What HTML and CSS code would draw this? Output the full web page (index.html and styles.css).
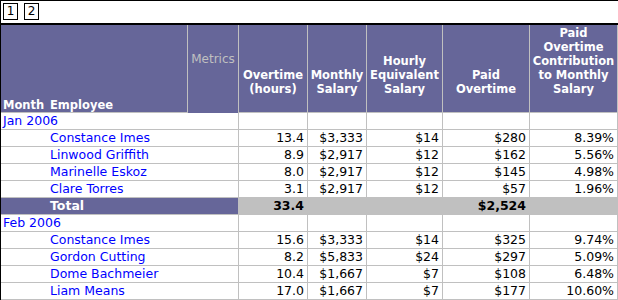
FILE: index.html
```html
<!DOCTYPE html>
<html>
<head>
<meta charset="utf-8">
<link rel="stylesheet" href="styles.css">
</head>
<body>
<div class="report">
  <div class="pager">
    <span class="page">1</span>
    <span class="page">2</span>
  </div>
  <div class="grid">
    <div class="hd hd-attr"><span class="hd-month">Month</span><span>Employee</span></div>
    <div class="hd hd-metrics">Metrics</div>
    <div class="hd hd-metric">Overtime<br>(hours)</div>
    <div class="hd hd-metric">Monthly<br>Salary</div>
    <div class="hd hd-metric">Hourly<br>Equivalent<br>Salary</div>
    <div class="hd hd-metric">Paid<br>Overtime</div>
    <div class="hd hd-metric">Paid<br>Overtime<br>Contribution<br>to Monthly<br>Salary</div>

    <div class="c name month">Jan 2006</div><div class="c"></div><div class="c"></div><div class="c"></div><div class="c"></div><div class="c"></div>
    <div class="c name emp">Constance Imes</div><div class="c num">13.4</div><div class="c num">$3,333</div><div class="c num">$14</div><div class="c num">$280</div><div class="c num">8.39%</div>
    <div class="c name emp">Linwood Griffith</div><div class="c num">8.9</div><div class="c num">$2,917</div><div class="c num">$12</div><div class="c num">$162</div><div class="c num">5.56%</div>
    <div class="c name emp">Marinelle Eskoz</div><div class="c num">8.0</div><div class="c num">$2,917</div><div class="c num">$12</div><div class="c num">$145</div><div class="c num">4.98%</div>
    <div class="c name emp">Clare Torres</div><div class="c num">3.1</div><div class="c num">$2,917</div><div class="c num">$12</div><div class="c num">$57</div><div class="c num">1.96%</div>
    <div class="c name total">Total</div><div class="c num sub">33.4</div><div class="c num sub"></div><div class="c num sub"></div><div class="c num sub">$2,524</div><div class="c num sub"></div>

    <div class="c name month">Feb 2006</div><div class="c"></div><div class="c"></div><div class="c"></div><div class="c"></div><div class="c"></div>
    <div class="c name emp">Constance Imes</div><div class="c num">15.6</div><div class="c num">$3,333</div><div class="c num">$14</div><div class="c num">$325</div><div class="c num">9.74%</div>
    <div class="c name emp">Gordon Cutting</div><div class="c num">8.2</div><div class="c num">$5,833</div><div class="c num">$24</div><div class="c num">$297</div><div class="c num">5.09%</div>
    <div class="c name emp">Dome Bachmeier</div><div class="c num">10.4</div><div class="c num">$1,667</div><div class="c num">$7</div><div class="c num">$108</div><div class="c num">6.48%</div>
    <div class="c name emp">Liam Means</div><div class="c num">17.0</div><div class="c num">$1,667</div><div class="c num">$7</div><div class="c num">$177</div><div class="c num">10.60%</div>
  </div>
</div>
</body>
</html>
```
FILE: styles.css
```css
html, body {
  margin: 0;
  padding: 0;
  background: #ffffff;
}
.report {
  width: 617px;
  border-left: 1px solid #000;
  border-top: 1px solid #000;
  font-family: "DejaVu Sans", Verdana, sans-serif;
  font-size: 12.5px;
  color: #000;
}
.pager {
  height: 24px;
  box-sizing: border-box;
  padding: 2px 0 0 2px;
  display: flex;
  gap: 6px;
  align-items: flex-start;
  border-bottom: 2px solid #000;
}
.page {
  width: 15px;
  height: 17px;
  box-sizing: border-box;
  border: 1px solid #000;
  font-size: 12px;
  line-height: 15px;
  text-align: center;
}
.grid {
  display: grid;
  grid-template-columns: 187px 51px 69px 59px 76px 87px 88px;
  grid-template-rows: 88px;
  grid-auto-rows: 17px;
}
.grid > div {
  box-sizing: border-box;
  border-right: 1px solid #c0c0c0;
  border-bottom: 1px solid #c0c0c0;
  overflow: hidden;
  white-space: nowrap;
}
.hd {
  background: #666699;
  color: #ffffff;
  font-weight: bold;
  font-size: 11.5px;
  line-height: 14px;
  display: flex;
}
.hd-attr {
  align-items: flex-end;
  padding-left: 2px;
}
.hd-month {
  width: 47px;
}
.hd-metrics {
  font-weight: normal;
  font-size: 12px;
  color: #c0c0c0;
  justify-content: center;
  align-items: flex-start;
  padding-top: 27px;
}
.grid > .hd-metrics {
  border-bottom: none;
}
.hd-metric {
  align-items: flex-end;
  justify-content: center;
  text-align: center;
  padding-bottom: 16px;
}
.c {
  line-height: 16px;
}
.name {
  grid-column: span 2;
  color: #0000ff;
}
.month {
  padding-left: 2px;
}
.emp {
  padding-left: 49px;
}
.num {
  text-align: right;
  padding-right: 3px;
}
.total {
  background: #666699;
  color: #ffffff;
  font-weight: bold;
  padding-left: 49px;
}
.sub {
  background: #c0c0c0;
  font-weight: bold;
}
```
